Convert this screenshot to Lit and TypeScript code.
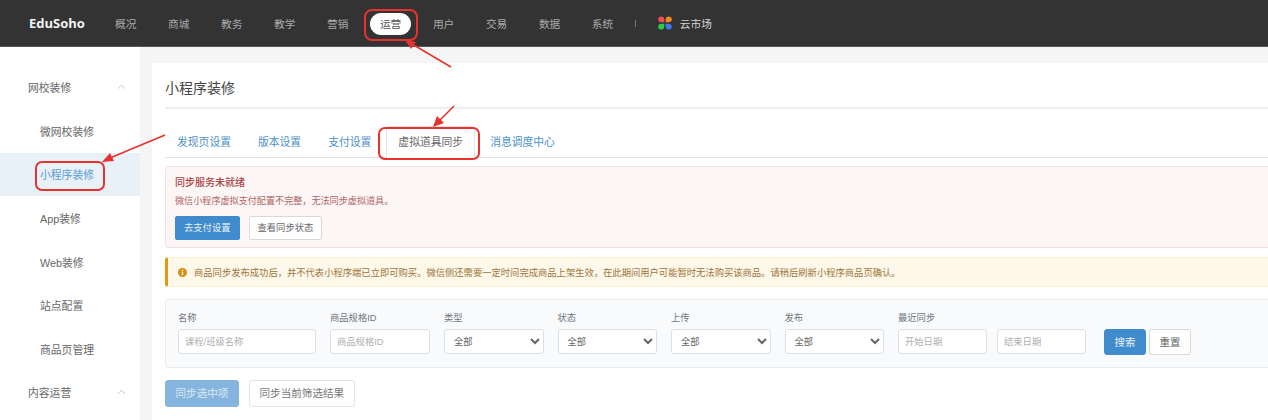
import { LitElement, html, css } from "lit";
import { customElement } from "lit/decorators.js";

const chevron = html`<svg class="chev" width="9" height="6" viewBox="0 0 9 6"><path d="M1 4.6 4.5 1.4 8 4.6" fill="none" stroke="#c8c8c8" stroke-width="1"/></svg>`;

@customElement("app-root")
export class AppRoot extends LitElement {
  static styles = css`
    :host {
      display: block;
      position: relative;
      width: 1268px;
      height: 420px;
      overflow: hidden;
      background: #f5f5f5;
      font-family: "Liberation Sans", "Noto Sans CJK SC", sans-serif;
      color: #666;
    }
    * { box-sizing: border-box; }
    .top {
      height: 47px;
      background: #333;
      border-bottom: 1px solid #555;
      display: flex;
      align-items: center;
      padding-left: 29px;
      color: #aaa;
      font-size: 10.7px;
    }
    .brand { font-family: "Open Sans", "Liberation Sans", sans-serif; font-weight: 700; font-size: 13px; color: #f2f2f2; width: 86px; }
    .nav { width: 21.4px; margin-right: 31.6px; white-space: nowrap; }
    .pill {
      position: relative;
      color: #555;
    }
    .pill::before {
      content: "";
      position: absolute;
      inset: -3px -10px -4px -10px;
      background: #fff;
      border-radius: 11px;
    }
    .pill span { position: relative; }
    .sep { width: 1px; height: 7px; background: #777; margin: 0 22px 0 -10px; }
    .market { display: flex; align-items: center; gap: 8px; color: #d5d5d5; }
    .body { display: flex; height: 373px; }
    .side {
      flex: 0 0 140px;
      background: #fff;
      padding-top: 18.4px;
      font-size: 10.8px;
    }
    .row { height: 43.6px; display: flex; align-items: center; justify-content: space-between; padding: 0 14px 0 40px; color: #666; }
    .row.group { padding-left: 28px; }
    .row.on { background: #e9f1f8; color: #5a9bd5; }
    .chev { display: block; }
    .card {
      flex: 0 0 1160px;
      margin: 16px 0 0 12px;
      background: #fff;
      padding: 0 13px;
    }
    .title {
      height: 46px;
      padding-top: 16px;
      border-bottom: 2px solid #eee;
      font-size: 14px;
      line-height: 18px;
      color: #444;
    }
    .tabs {
      display: flex;
      margin-top: 17px;
      height: 32px;
      border-bottom: 1px solid #e4e4e4;
      font-size: 10.8px;
    }
    .tab { padding: 0 12px; margin-right: 3px; line-height: 32px; color: #4a90c9; white-space: nowrap; }
    .tab.on { color: #666; background: #fff; border: 1px solid #e4e4e4; border-bottom-color: #fff; border-radius: 3px 3px 0 0; height: 32px; padding: 0 11px; line-height: 31px; }
    .danger {
      margin-top: 8px;
      height: 82px;
      background: #fcf6f6;
      border: 1px solid #f4dfe2;
      border-radius: 3px;
      padding: 9px 9px 0;
    }
    .danger b { display: block; font-size: 10px; line-height: 14px; font-weight: 500; color: #a94442; }
    .danger p { margin: 4px 0 8px; font-size: 9.1px; line-height: 14px; color: #b0645f; }
    .btns { display: flex; gap: 9px; }
    .btn {
      height: 24px;
      font-size: 9.3px;
      line-height: 22px;
      padding: 0 8px;
      border: 1px solid #d8d8d8;
      border-radius: 2px;
      background: #fff;
      color: #666;
      white-space: nowrap;
    }
    .btn.primary { background: #3f8bcb; border-color: #3f8bcb; color: #e8f1f8; }
    .warn {
      margin-top: 9px;
      height: 30px;
      background: #fdf8e9;
      border: 1px solid #faf0d6;
      border-left: 3px solid #e39a12;
      border-radius: 3px;
      display: flex;
      align-items: center;
      gap: 7px;
      padding-left: 10px;
      font-size: 9.3px;
      color: #a0743a;
      white-space: nowrap;
    }
    .filter {
      margin-top: 12px;
      height: 69px;
      background: #f9fafc;
      border: 1px solid #e9ebef;
      border-radius: 3px;
      padding: 12px 12px 0;
      display: flex;
      align-items: flex-end;
      padding-bottom: 13px;
    }
    .f { display: flex; flex-direction: column; gap: 5px; margin-right: 14px; flex: none; }
    .f label { font-size: 9.3px; line-height: 11px; height: 11px; color: #6f7680; white-space: nowrap; }
    input, select {
      display: block;
      height: 25px;
      width: 100%;
      border: 1px solid #dcdfe3;
      border-radius: 3px;
      background: #fff;
      font: inherit;
      font-size: 9.3px;
      color: #666;
      padding: 0 6px;
      outline: none;
    }
    input::placeholder { color: #b0b0b0; }
    select { padding: 0 5px; }
    .dates { display: flex; gap: 10px; }
    .dates input { width: 89px; }
    .ops { display: flex; gap: 3px; margin-left: 4px; }
    .ops .btn { height: 26px; line-height: 24px; padding: 0; width: 42px; text-align: center; font-size: 10.5px; margin-bottom: -1px; border-radius: 3px; }
    .foot { display: flex; gap: 10px; margin-top: 12px; }
    .foot .btn { height: 27px; line-height: 25px; font-size: 10.6px; padding: 0 9.5px; border-radius: 3px; border-color: #e3e3e3; color: #777; }
    .foot .btn.off { background: #85b5de; border-color: #85b5de; color: #dbe9f5; }
    .marks { position: absolute; inset: 0; pointer-events: none; }
  `;

  render() {
    const navs1 = ["概况", "商城", "教务", "教学", "营销"];
    const navs2 = ["用户", "交易", "数据", "系统"];
    return html`
      <header class="top">
        <div class="brand">EduSoho</div>
        ${navs1.map((n) => html`<div class="nav">${n}</div>`)}
        <div class="nav pill"><span>运营</span></div>
        ${navs2.map((n) => html`<div class="nav">${n}</div>`)}
        <div class="sep"></div>
        <div class="market">
          <svg width="14" height="14" viewBox="0 0 14 14">
            <path d="M3.2 0.4C5 0.4 6.3 1.6 6.3 3.3V6.3H3.2C1.4 6.3 0.2 5 0.2 3.3S1.4 0.4 3.2 0.4Z" fill="#ea4f55"/>
            <path d="M10.8 0.4C9 0.4 7.7 1.6 7.7 3.3V6.3H10.8C12.6 6.3 13.8 5 13.8 3.3S12.6 0.4 10.8 0.4Z" fill="#f08a24"/>
            <path d="M3.2 13.6C5 13.6 6.3 12.4 6.3 10.7V7.7H3.2C1.4 7.7 0.2 9 0.2 10.7S1.4 13.6 3.2 13.6Z" fill="#2fc94a"/>
            <path d="M10.8 13.6C9 13.6 7.7 12.4 7.7 10.7V7.7H10.8C12.6 7.7 13.8 9 13.8 10.7S12.6 13.6 10.8 13.6Z" fill="#3f78ee"/>
          </svg>
          <span>云市场</span>
        </div>
      </header>
      <div class="body">
        <aside class="side">
          <div class="row group"><span>网校装修</span>${chevron}</div>
          <div class="row">微网校装修</div>
          <div class="row on">小程序装修</div>
          <div class="row">App装修</div>
          <div class="row">Web装修</div>
          <div class="row">站点配置</div>
          <div class="row">商品页管理</div>
          <div class="row group"><span>内容运营</span>${chevron}</div>
        </aside>
        <main class="card">
          <div class="title">小程序装修</div>
          <nav class="tabs">
            <div class="tab">发现页设置</div>
            <div class="tab">版本设置</div>
            <div class="tab">支付设置</div>
            <div class="tab on">虚拟道具同步</div>
            <div class="tab">消息调度中心</div>
          </nav>
          <section class="danger">
            <b>同步服务未就绪</b>
            <p>微信小程序虚拟支付配置不完整，无法同步虚拟道具。</p>
            <div class="btns">
              <div class="btn primary">去支付设置</div>
              <div class="btn">查看同步状态</div>
            </div>
          </section>
          <section class="warn">
            <svg width="9" height="9" viewBox="0 0 10 10"><circle cx="5" cy="5" r="5" fill="#d98e12"/><rect x="4.2" y="4.2" width="1.6" height="3.8" fill="#fdf8e9"/><rect x="4.2" y="2" width="1.6" height="1.5" fill="#fdf8e9"/></svg>
            <span>商品同步发布成功后，并不代表小程序端已立即可购买。微信侧还需要一定时间完成商品上架生效，在此期间用户可能暂时无法购买该商品。请稍后刷新小程序商品页确认。</span>
          </section>
          <section class="filter">
            <div class="f" style="width:138px"><label>名称</label><input placeholder="课程/班级名称" /></div>
            <div class="f" style="width:100px"><label>商品规格ID</label><input placeholder="商品规格ID" /></div>
            ${["类型", "状态", "上传", "发布"].map(
              (l) => html`<div class="f" style="width:99.5px"><label>${l}</label><select><option>全部</option></select></div>`
            )}
            <div class="f"><label>最近同步</label><div class="dates"><input placeholder="开始日期" /><input placeholder="结束日期" /></div></div>
            <div class="ops">
              <div class="btn primary">搜索</div>
              <div class="btn">重置</div>
            </div>
          </section>
          <div class="foot">
            <div class="btn off">同步选中项</div>
            <div class="btn">同步当前筛选结果</div>
          </div>
        </main>
      </div>
      <svg class="marks" width="1268" height="420" viewBox="0 0 1268 420" fill="none">
        <g stroke="#e8322d" stroke-width="2">
          <rect x="365" y="10" width="52" height="30" rx="7"/>
          <rect x="379" y="128" width="100" height="31" rx="6"/>
          <rect x="36" y="162" width="68" height="28" rx="6"/>
          <path d="M451 67 412 44" stroke-width="1.6"/>
          <path d="M454 106 438 122" stroke-width="1.6"/>
          <path d="M165 135 110 158" stroke-width="1.6"/>
        </g>
        <g fill="#e8322d">
          <path d="M405 40 416 42 411 49Z"/>
          <path d="M433 127 437 116 444 123Z"/>
          <path d="M102 162 110 153 114 161Z"/>
        </g>
      </svg>
    `;
  }
}
